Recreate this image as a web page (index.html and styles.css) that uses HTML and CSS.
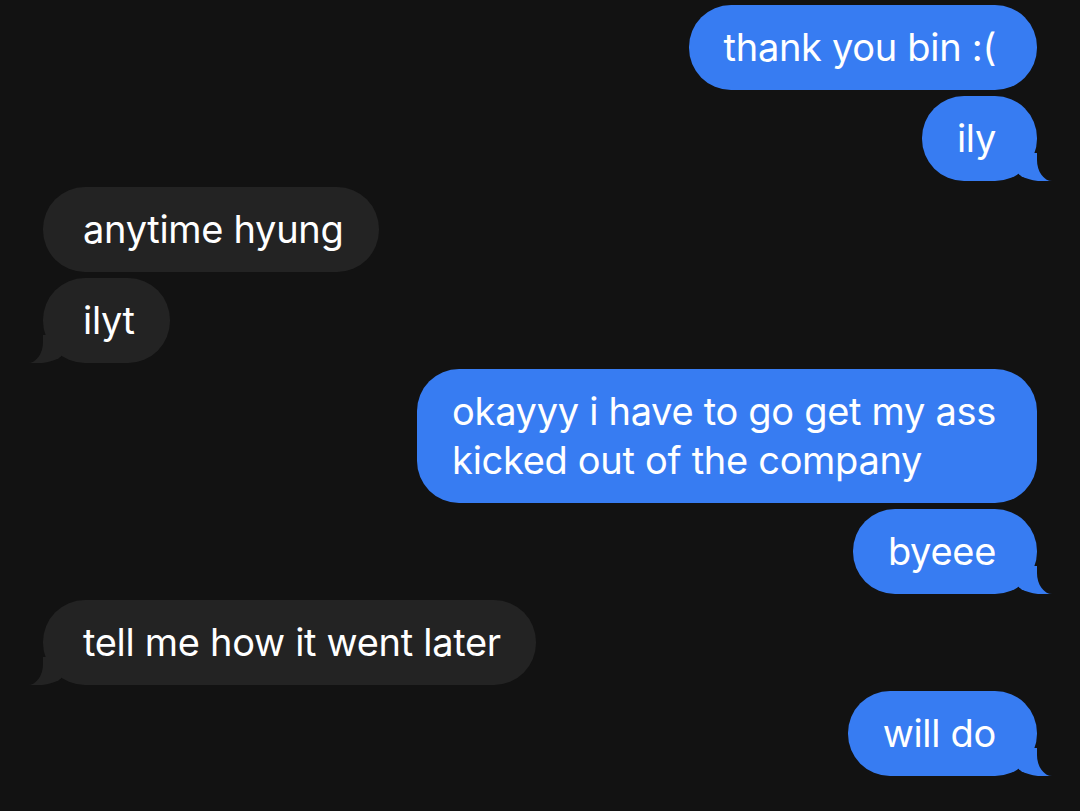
FILE: index.html
```html
<!DOCTYPE html>
<html>
<head>
    <meta charset="utf-8">
    <link rel="stylesheet" href="styles.css">
</head>
<body>
    <div class="thread">
        <div class="msg out">thank you bin :(</div>
        <div class="msg out tail">ily</div>
        <div class="msg in">anytime hyung</div>
        <div class="msg in tail">ilyt</div>
        <div class="msg out">okayyy i have to go get my ass<br>kicked out of the company</div>
        <div class="msg out tail">byeee</div>
        <div class="msg in tail">tell me how it went later</div>
        <div class="msg out tail">will do</div>
    </div>
</body>
</html>
```

FILE: styles.css
```css
* {
    margin: 0;
    padding: 0;
    box-sizing: border-box;
}

body {
    width: 1080px;
    height: 811px;
    overflow: hidden;
    background: #121212;
    font-family: 'Inter', 'Roboto', sans-serif;
    color: #fff;
}

.thread {
    display: flex;
    flex-direction: column;
    gap: 6px;
    padding: 5px 43px 0;
}

.msg {
    position: relative;
    max-width: 660px;
    border-radius: 42px;
    font-size: 38px;
    line-height: 49px;
    letter-spacing: -0.3px;
}

.out {
    align-self: flex-end;
    padding: 18px 41px 18px 35px;
    background: #377cf2;
}

.in {
    align-self: flex-start;
    padding: 18px 35px 18px 40px;
    background: #232323;
}

/* bubble tails */
.tail::before,
.tail::after {
    content: '';
    position: absolute;
    bottom: 0;
}

.out.tail::before {
    right: -16px;
    width: 36px;
    height: 28px;
    background: #377cf2;
    border-bottom-left-radius: 26px 11px;
    border-top-right-radius: 6px;
}

.out.tail::after {
    left: 100%;
    width: 22px;
    height: 32px;
    background: #121212;
    border-bottom-left-radius: 15px 21px;
}

.in.tail::before {
    left: -16px;
    width: 36px;
    height: 28px;
    background: #232323;
    border-bottom-right-radius: 26px 11px;
    border-top-left-radius: 6px;
}

.in.tail::after {
    right: 100%;
    width: 22px;
    height: 32px;
    background: #121212;
    border-bottom-right-radius: 15px 21px;
}
```
